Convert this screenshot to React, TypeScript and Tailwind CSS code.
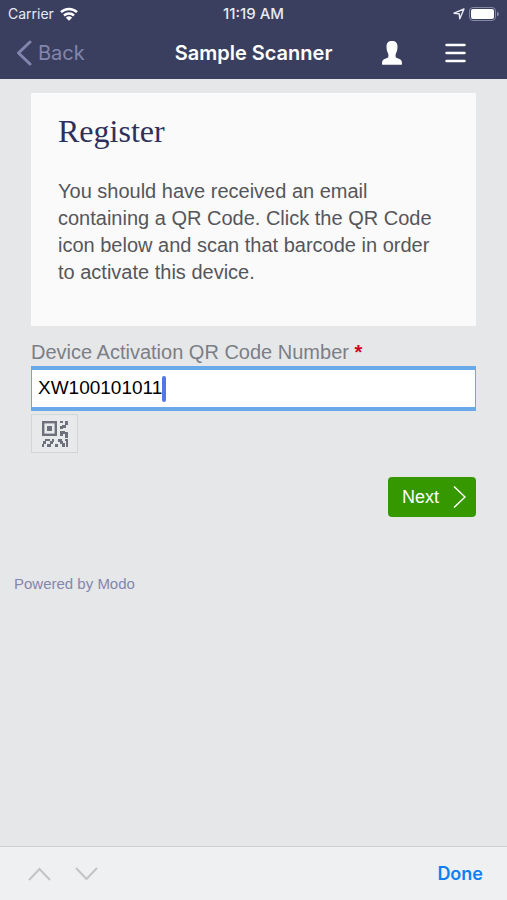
import React, { useState } from "react";

// small modules around the finder square, as [x, y, width, height]
const QR_MODULES = [
  [18, 0, 3, 2], [23, 0, 3, 4], [20, 4, 4, 3], [18, 5, 3, 3],
  [18, 10, 5, 3], [22, 11, 4, 2], [18, 13, 3, 2], [23, 13, 3, 4],
  [3, 18, 5, 2], [10, 18, 2, 3], [16, 18, 4, 3], [23, 18, 3, 2],
  [1, 20, 3, 3], [8, 20, 3, 3], [18, 20, 3, 3], [24, 20, 2, 6],
  [0, 23, 2, 3], [5, 23, 4, 3], [13, 23, 3, 3], [20, 22, 3, 4],
];

const QrIcon = () => (
  <svg viewBox="0 0 26 26" className="w-[26px] h-[26px]" fill="#6e707c" aria-hidden="true">
    <rect x="1.2" y="1.2" width="12.600" height="12.600" fill="none" stroke="#6e707c" strokeWidth="2.400" />
    <rect x="5" y="5" width="5" height="5" />
    {QR_MODULES.map(([x, y, w, h]) => (
      <rect key={`${x}-${y}`} x={x} y={y} width={w} height={h} />
    ))}
  </svg>
);

const StatusBar = () => (
  <div className="grid grid-cols-3 items-center h-7 px-2 text-sm text-[#e8e9f2]">
    <div className="flex items-center gap-1.5">
      <span>Carrier</span>
      <svg viewBox="0 0 18 14" className="w-[18px] h-[14px]" fill="none" stroke="white" strokeWidth="2.5" aria-hidden="true">
        <path d="M1 5.2a11.6 11.6 0 0 1 16 0" />
        <path d="M4 8.5a7.3 7.3 0 0 1 10 0" />
        <path d="M9 13.8 5.9 10.8a4.5 4.5 0 0 1 6.2 0z" fill="white" stroke="none" />
      </svg>
    </div>
    <div className="text-center text-[15px] font-medium">11:19 AM</div>
    <div className="flex items-center justify-end gap-1">
      <svg viewBox="0 0 12 12" className="w-3 h-3" fill="none" stroke="#e8e9f2" strokeWidth="1.4" strokeLinejoin="round" aria-hidden="true">
        <path d="M11 1 6.8 10.8 6.2 5.8 1 5.2z" />
      </svg>
      <svg viewBox="0 0 30 14" className="w-[30px] h-[14px]" aria-hidden="true">
        <rect x="0.5" y="0.5" width="26" height="13" rx="3.5" fill="none" stroke="#8588a3" />
        <rect x="2" y="2" width="23" height="10" rx="2" fill="white" />
        <path d="M28 4.5v5q2-1 2-2.5t-2-2.5z" fill="#8588a3" />
      </svg>
    </div>
  </div>
);

const NavBar = () => (
  <div className="grid grid-cols-[1fr_auto_1fr] items-center h-[50px] px-4">
    <button className="flex items-center gap-1.5 text-xl text-[#8286ae] justify-self-start">
      <svg viewBox="0 0 16 26" className="w-4 h-[26px]" fill="none" stroke="#8286ae" strokeWidth="3" strokeLinecap="round" strokeLinejoin="round" aria-hidden="true">
        <path d="M14 2 2.5 13 14 24" />
      </svg>
      Back
    </button>
    <h1 className="text-xl font-semibold text-white">Sample Scanner</h1>
    <div className="flex items-center justify-end gap-[43px] pr-[25px]">
      <button aria-label="Account">
        <svg viewBox="0 0 20 24" className="w-5 h-6" fill="white" aria-hidden="true">
          <path d="M10 0c3.7 0 5.5 2 5.5 5.600 0 3.200-.7 5.800-1.900 7.600v2.100c0 .9.4 1.400 1.300 1.700l3.100 1.300c1.500.6 2 2.300 2 4.800 0 .4-.2.7-.6.7H.6c-.4 0-.6-.3-.6-.7 0-2.500.5-4.200 2-4.800l3.100-1.300c.9-.3 1.300-.8 1.300-1.700v-2.100C5.200 11.400 4.500 8.800 4.500 5.600 4.500 2 6.300 0 10 0z" />
        </svg>
      </button>
      <button aria-label="Menu">
        <svg viewBox="0 0 21 20" className="w-[21px] h-5" stroke="white" strokeWidth="2.5" strokeLinecap="round" aria-hidden="true">
          <path d="M1.500 2h18M1.500 10h18M1.500 18h18" />
        </svg>
      </button>
    </div>
  </div>
);

const RegisterForm = () => {
  const [code, setCode] = useState("XW100101011");

  return (
    <form className="px-[31px]" onSubmit={(e) => e.preventDefault()}>
      <label htmlFor="code" className="block text-xl leading-7 text-[#7c7e85]">
        Device Activation QR Code Number <span className="font-bold text-[#d0021b]">*</span>
      </label>
      <div className="flex items-center h-[45px] px-1.5 bg-white border-x border-y-4 border-[#6aa9e9]">
        <input
          id="code"
          value={code}
          onChange={(e) => setCode(e.target.value)}
          className="[field-sizing:content] text-[19px] text-black caret-transparent outline-none"
        />
        <span className="w-1 h-[26px] rounded-full bg-[#5377e6]" />
      </div>
      <button type="button" aria-label="Scan QR code" className="flex items-center justify-center w-[47px] h-[39px] mt-[3px] border border-[#d4d5d9] bg-[#e8e9eb]">
        <QrIcon />
      </button>
      <div className="flex justify-end mt-6">
        <button type="submit" className="flex items-center gap-3.5 h-10 pl-3.5 pr-2.5 rounded-sm bg-[#359800] text-lg text-white">
          Next
          <svg viewBox="0 0 13 24" className="w-[13px] h-6" fill="none" stroke="white" strokeWidth="1.5" aria-hidden="true">
            <path d="M1 1.500 12 12 1 22.500" />
          </svg>
        </button>
      </div>
    </form>
  );
};

const KeyboardBar = () => (
  <div className="flex items-center h-[54px] pl-7 pr-6 bg-[#eff0f1] border-t border-[#cdcfd2] font-['Inter',sans-serif]">
    <button aria-label="Previous field">
      <svg viewBox="0 0 23 14" className="w-[23px] h-[14px]" fill="none" stroke="#c2c4c5" strokeWidth="2" aria-hidden="true">
        <path d="M1 13 11.500 2 22 13" />
      </svg>
    </button>
    <button aria-label="Next field" className="ml-6">
      <svg viewBox="0 0 23 14" className="w-[23px] h-[14px]" fill="none" stroke="#c2c4c5" strokeWidth="2" aria-hidden="true">
        <path d="M1 1 11.500 12 22 1" />
      </svg>
    </button>
    <button className="ml-auto text-lg font-semibold text-[#117ff2]">Done</button>
  </div>
);

export default function App() {
  return (
    <div className="flex flex-col min-h-screen bg-[#e6e7e9] font-['Liberation_Sans',Arial,sans-serif]">
      <header className="bg-[#3a3f5f] pb-px font-['Inter',sans-serif]">
        <StatusBar />
        <NavBar />
      </header>
      <main className="flex-1">
        <section className="mx-[31px] mt-3.5 mb-3 pl-[27px] pr-10 pt-5 pb-10 bg-[#fafafa]">
          <h2 className="text-[32px] leading-9 text-[#2f2f5c] font-['Liberation_Serif',serif]">Register</h2>
          <p className="mt-[29px] text-xl leading-[27px] text-[#55565a]">
            You should have received an email containing a QR Code. Click the QR Code icon below and scan that barcode in
            order to activate this device.
          </p>
        </section>
        <RegisterForm />
        <footer className="mt-14 px-3.5 text-[15px] text-[#8486ac]">Powered by Modo</footer>
      </main>
      <KeyboardBar />
    </div>
  );
}
